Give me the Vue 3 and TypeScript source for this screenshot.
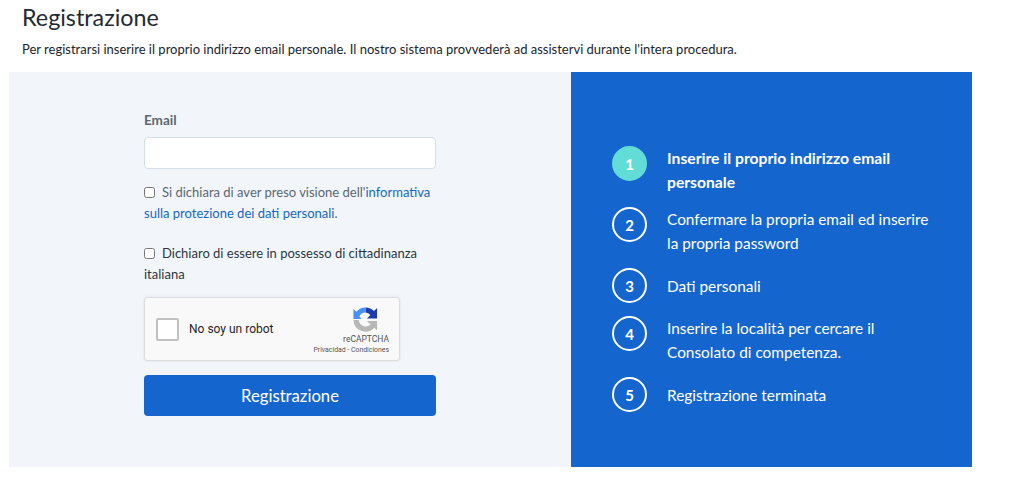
<script setup lang="ts">
const steps = [
  { n: 1, text: 'Inserire il proprio indirizzo email personale', active: true },
  { n: 2, text: 'Confermare la propria email ed inserire la propria password', active: false },
  { n: 3, text: 'Dati personali', active: false },
  { n: 4, text: 'Inserire la località per cercare il Consolato di competenza.', active: false },
  { n: 5, text: 'Registrazione terminata', active: false },
]
</script>

<template>
  <div class="page">
    <h1 class="title">Registrazione</h1>
    <p class="intro">Per registrarsi inserire il proprio indirizzo email personale. Il nostro sistema provvederà ad assistervi durante l'intera procedura.</p>
    <div class="panel">
      <section class="left">
        <form class="form" @submit.prevent>
          <label class="label" for="email">Email</label>
          <input id="email" class="input" type="text" />
          <div class="check first">
            <input type="checkbox" class="box" />
            <span class="grey">Si dichiara di aver preso visione dell'<a class="link">informativa sulla protezione dei dati personali</a>.</span>
          </div>
          <div class="check second">
            <input type="checkbox" class="box" />
            <span>Dichiaro di essere in possesso di cittadinanza italiana</span>
          </div>
          <div class="captcha">
            <span class="capbox"></span>
            <span class="captext">No soy un robot</span>
            <div class="capbrand">
              <svg class="caplogo" width="27" height="27" viewBox="0 0 28 28">
                <path d="M14 1.5a12.5 12.5 0 0 1 8.8 3.7L26 2v11H15.5l3.6-3.6A7.2 7.2 0 0 0 14 6.8z" fill="#1c3aa9" />
                <path d="M14 1.5A12.5 12.5 0 0 0 4.5 6L1.5 3v10.5H10L7.6 11A7.2 7.2 0 0 1 14 6.8z" fill="#4a90f5" />
                <path d="M1.5 14.5a12.5 12.5 0 0 0 21.6 8.1l2.9 2.9V15.5H15.5l3.9 3.7A7.3 7.3 0 0 1 7 14.5z" fill="#b7b7b7" />
              </svg>
              <span class="capname">reCAPTCHA</span>
              <span class="caplinks">Privacidad - Condiciones</span>
            </div>
          </div>
          <button type="submit" class="submit">Registrazione</button>
        </form>
      </section>
      <section class="right">
        <ol class="steps">
          <li v-for="s in steps" :key="s.n" class="step" :class="{ active: s.active }">
            <span class="num">{{ s.n }}</span>
            <span class="text">{{ s.text }}</span>
          </li>
        </ol>
      </section>
    </div>
  </div>
</template>

<style>
html, body { margin: 0; background: #fff; }
</style>

<style scoped>
.page {
  width: 1024px;
  height: 501px;
  box-sizing: border-box;
  padding: 0 52px 0 9px;
  overflow: hidden;
  font-family: Lato, "Open Sans", sans-serif;
  color: #19252f;
}
.title {
  margin: 0;
  padding: 3px 0 0 13px;
  font-size: 23.3px;
  line-height: 29px;
  font-weight: 400;
  color: #1f2a33;
}
.intro {
  margin: 0;
  padding: 8px 0 0 13px;
  font-size: 13px;
  line-height: 18px;
  white-space: nowrap;
  color: #19252f;
}
.panel {
  display: flex;
  height: 395px;
  margin-top: 14px;
}
.left {
  width: 562px;
  box-sizing: border-box;
  padding: 39px 0 0 135px;
  background: #f2f6fb;
}
.form {
  display: flex;
  flex-direction: column;
  width: 292px;
}
.label {
  font-size: 13.5px;
  font-weight: 700;
  line-height: 18px;
  color: #5b6772;
}
.input {
  height: 32px;
  margin-top: 8px;
  box-sizing: border-box;
  border: 1px solid #d5dde6;
  border-radius: 4px;
  background: #fff;
}
.check {
  display: block;
  font-size: 13px;
  line-height: 21px;
  color: #2b3640;
}
.first { margin-top: 13px; }
.second { margin-top: 19px; }
.grey { color: #5b6772; }
.box {
  width: 11px;
  height: 11px;
  margin: 0 7px 0 0;
  vertical-align: -1px;
}
.link { color: #1565c9; }
.captcha {
  display: flex;
  align-items: center;
  width: 256px;
  height: 64px;
  margin-top: 12px;
  box-sizing: border-box;
  padding-left: 11px;
  border: 1px solid #dcdcdc;
  border-radius: 3px;
  background: #f9f9f9;
  box-shadow: 0 0 3px rgba(0, 0, 0, 0.08);
  font-family: Roboto, "Liberation Sans", sans-serif;
}
.capbox {
  width: 23px;
  height: 23px;
  box-sizing: border-box;
  border: 2px solid #c1c1c1;
  border-radius: 2px;
  background: #fff;
}
.captext {
  margin-left: 10px;
  font-size: 12px;
  color: #1f1f1f;
}
.capbrand {
  display: flex;
  flex-direction: column;
  align-items: flex-end;
  margin-left: auto;
  padding-right: 10px;
}
.caplogo { margin: 2px 10px 0 0; }
.capname {
  margin-top: 0;
  font-size: 8.5px;
  line-height: 12px;
  color: #555;
}
.caplinks {
  font-size: 6.9px;
  line-height: 10px;
  color: #555;
  white-space: nowrap;
}
.submit {
  height: 41px;
  margin-top: 14px;
  border: 0;
  border-radius: 4px;
  background: #1565cf;
  color: #fff;
  font-family: inherit;
  font-size: 16.7px;
}
.right {
  width: 401px;
  box-sizing: border-box;
  padding: 74px 0 0 41px;
  background: #1565cf;
  color: #fff;
}
.steps {
  list-style: none;
  margin: 0;
  padding: 0;
  display: flex;
  flex-direction: column;
  gap: 13px;
}
.step {
  display: flex;
  gap: 20px;
  min-height: 35px;
  align-items: center;
  font-size: 15.4px;
  line-height: 24px;
}
.num {
  flex: none;
  align-self: flex-start;
  width: 35px;
  height: 35px;
  box-sizing: border-box;
  display: flex;
  align-items: center;
  justify-content: center;
  border: 2px solid #fff;
  border-radius: 50%;
  font-size: 15px;
  font-weight: 700;
}
.text { width: 270px; }
.step.active { font-weight: 700; }
.step.active .text { font-size: 15.7px; }
.step.active .num { background: #62dcd6; border-color: #62dcd6; }
</style>
